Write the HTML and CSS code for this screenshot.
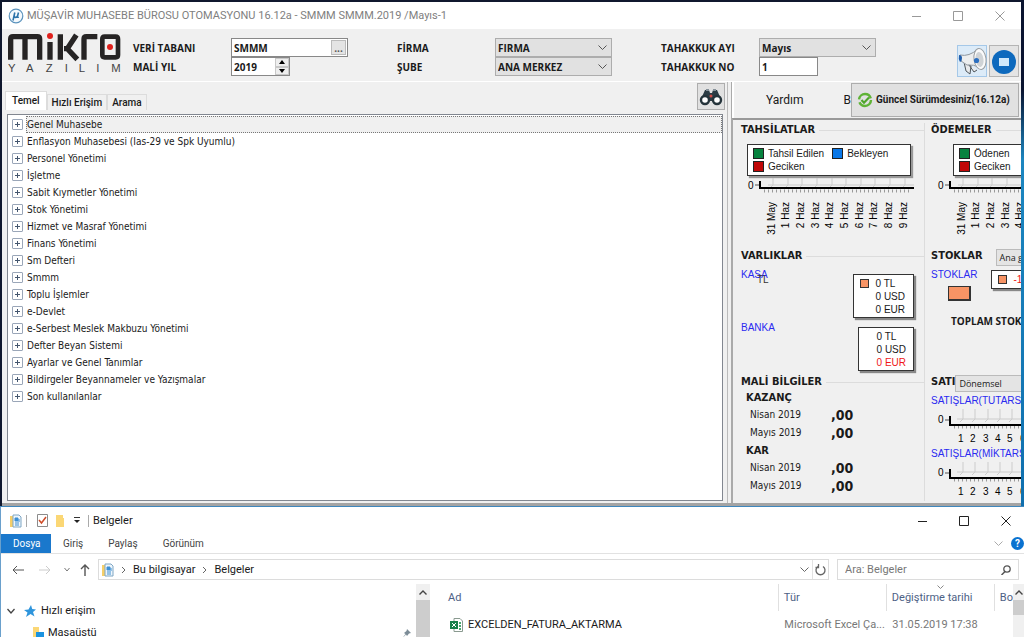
FILE: index.html
```html
<!DOCTYPE html>
<html lang="tr">
<head>
<meta charset="utf-8">
<title>Müşavir Muhasebe Bürosu Otomasyonu</title>
<link rel="stylesheet" href="styles.css">
</head>
<body>
<main class="app">
  <header class="titlebar">
    <svg class="app-icon" viewBox="0 0 16 16" width="16" height="16"><circle cx="8" cy="8" r="6.8" fill="#f4f9fd" stroke="#5b93bd" stroke-width="1.2"/><path d="M6.8 4.5 5 12.5M6.3 7.5c-.5 2.6 2.8 2.5 3.4 0l.8-3M9.7 7.5c-.4 1.5 0 2.2 1 1.5" fill="none" stroke="#2c73aa" stroke-width="1.6"/></svg>
    <h1 class="app-title">MÜŞAVİR MUHASEBE BÜROSU OTOMASYONU 16.12a - SMMM SMMM.2019 /Mayıs-1</h1>
    <div class="window-buttons faded">
      <button aria-label="Küçült"><svg width="10" height="10"><path d="M1 5.5h9" /></svg></button>
      <button aria-label="Büyüt"><svg width="10" height="10"><path d="M.5.5h9v9h-9z" /></svg></button>
      <button aria-label="Kapat"><svg width="10" height="10"><path d="m.5.5 9 9m0-9-9 9" /></svg></button>
    </div>
  </header>

  <section class="filters">
    <svg class="logo" viewBox="0 0 339 120" width="113" height="40" role="img" aria-label="mikro yazılım">
      <g fill="none" stroke="#262424" stroke-width="16">
        <path d="M8 80V18q0-7 7-7H88q7 0 7 7V80M51 11V80M126 27V80M157 4V80M168 47H178L205 6M176 45 208 79M228 80V18q0-7 7-7H268"/>
        <path stroke-width="14" d="M290 11H323q7 0 7 7V66q0 7-7 7H290q-7 0-7-7V18q0-7 7-7z"/>
      </g>
      <circle cx="126" cy="9" r="9" fill="#e0201c"/><circle cx="306" cy="42" r="9" fill="#e0201c"/>
      <text class="logo-sub" x="0 54 113 170 212 265 310" y="117">YAZILIM</text>
    </svg>
    <div class="field-group">
      <label for="db">VERİ TABANI</label>
      <div class="picker"><input id="db" value="SMMM"><button aria-label="Seç">...</button></div>
      <label for="year">MALİ YIL</label>
      <div class="spinner"><input id="year" value="2019"><span class="spin-buttons"><button aria-label="Artır"><svg width="6" height="4"><path d="M0 4 3 0l3 4z"/></svg></button><button aria-label="Azalt"><svg width="6" height="4"><path d="M0 0h6L3 4z"/></svg></button></span></div>
    </div>
    <div class="field-group">
      <label for="firm">FİRMA</label><select id="firm"><option>FIRMA</option></select>
      <label for="branch">ŞUBE</label><select id="branch"><option>ANA MERKEZ</option></select>
    </div>
    <div class="field-group">
      <label for="month">TAHAKKUK AYI</label><select id="month"><option>Mayıs</option></select>
      <label for="no">TAHAKKUK NO</label><input id="no" class="short" value="1">
    </div>
    <div class="header-tools">
      <button class="tool active" aria-label="Duyurular"><svg viewBox="0 0 30 32" width="30" height="32"><path d="m6 16 2 9 4 3 1-8zM11 19l5 7 3-2" fill="#e8eaec" stroke="#4e565c"/><path d="M2 9q9 2 18-6l3 19q-8-4-14-3l-6-4z" fill="#eceeef" stroke="#8f979e"/><ellipse cx="22" cy="13" rx="6" ry="10.500" transform="rotate(-8 22 13)" fill="#fafafa" stroke="#9a9fa3"/><ellipse cx="21.500" cy="13.500" rx="4" ry="7.500" transform="rotate(-8 21.500 13.500)" fill="#cfd3d6"/><circle cx="18.500" cy="14.500" r="2.600" fill="#2b6fc0"/><path d="M1 9q3 0 3 3t-2 4q-2-3-1-7z" fill="#1f5fae"/></svg></button>
      <button class="tool" aria-label="Durdur"><svg viewBox="0 0 28 30" width="28" height="30"><circle cx="14" cy="16" r="12" fill="#0d69bd"/><path d="M9 12h10v8H9z" fill="#cfe8fa"/></svg></button>
    </div>
  </section>

  <div class="workspace">
    <section class="browser">
      <div class="tab-row">
        <nav class="tabs"><button class="current">Temel</button><button>Hızlı Erişim</button><button>Arama</button></nav>
        <button class="find" aria-label="Bul"><svg viewBox="0 0 24 20" width="24" height="20"><path d="M2 12 6 3h4l1 3h2l1-3h4l4 9v2H2z" fill="#2c3c44"/><path d="M7 3h3M14 3h3" stroke="#87929a" stroke-width="2"/><circle cx="6" cy="13" r="4" fill="#fff" stroke="#25343b" stroke-width="2.400"/><circle cx="18" cy="13" r="4" fill="#fff" stroke="#25343b" stroke-width="2.400"/><circle cx="12" cy="9" r="1.500" fill="#cf4a45"/></svg></button>
      </div>
      <ul class="tree">
        <li><button class="selected">Genel Muhasebe</button></li>
        <li><button>Enflasyon Muhasebesi (Ias-29 ve Spk Uyumlu)</button></li>
        <li><button>Personel Yönetimi</button></li>
        <li><button>İşletme</button></li>
        <li><button>Sabit Kıymetler Yönetimi</button></li>
        <li><button>Stok Yönetimi</button></li>
        <li><button>Hizmet ve Masraf Yönetimi</button></li>
        <li><button>Finans Yönetimi</button></li>
        <li><button>Sm Defteri</button></li>
        <li><button>Smmm</button></li>
        <li><button>Toplu İşlemler</button></li>
        <li><button>e-Devlet</button></li>
        <li><button>e-Serbest Meslek Makbuzu Yönetimi</button></li>
        <li><button>Defter Beyan Sistemi</button></li>
        <li><button>Ayarlar ve Genel Tanımlar</button></li>
        <li><button>Bildirgeler Beyannameler ve Yazışmalar</button></li>
        <li><button>Son kullanılanlar</button></li>
      </ul>
    </section>

    <aside class="side">
      <div class="side-bar">
        <button class="plain">Yardım</button><button class="plain cut">B</button>
        <button class="version"><svg viewBox="0 0 16 16" width="16" height="16"><circle cx="8" cy="8" r="6" fill="none" stroke="#5fb336" stroke-width="2.400" stroke-dasharray="16 3"/><path d="m4.500 8 2.500 2.700 5-5.200" fill="none" stroke="#4ea52b" stroke-width="2.200"/></svg>Güncel Sürümdesiniz(16.12a)</button>
      </div>
      <div class="cards">
        <section class="card">
          <h2>TAHSİLATLAR</h2>
          <div class="legend"><span class="key green">Tahsil Edilen</span><span class="key blue">Bekleyen</span><span class="key red">Geciken</span></div>
          <svg class="chart days" width="172" height="60">
            <path class="grid" d="M24 7h146M29 0v7l-3 3M44 0v7l-3 3M58 0v7l-3 3M73 0v7l-3 3M88 0v7l-3 3M102 0v7l-3 3M117 0v7l-3 3M131 0v7l-3 3M146 0v7l-3 3M161 0v7l-3 3"/>
            <path class="ticks" d="M20 13h148"/><path class="axis" d="M16 3v7H170"/><path class="zero" d="M11 7h4"/>
            <text x="4" y="11">0</text>
            <g class="turned"><text x="-24" y="31">31 May</text><text x="-24" y="45">1 Haz</text><text x="-24" y="60">2 Haz</text><text x="-24" y="75">3 Haz</text><text x="-24" y="89">4 Haz</text><text x="-24" y="104">5 Haz</text><text x="-24" y="119">6 Haz</text><text x="-24" y="133">7 Haz</text><text x="-24" y="148">8 Haz</text><text x="-24" y="163">9 Haz</text></g>
          </svg>
        </section>
        <section class="card">
          <h2>ÖDEMELER</h2>
          <div class="legend indent"><span class="key green">Ödenen</span><span class="key red">Geciken</span></div>
          <svg class="chart days" width="172" height="60">
            <path class="grid" d="M24 7h146M29 0v7l-3 3M44 0v7l-3 3M58 0v7l-3 3M73 0v7l-3 3M88 0v7l-3 3"/>
            <path class="ticks" d="M20 13h148"/><path class="axis" d="M16 3v7H170"/><path class="zero" d="M11 7h4"/>
            <text x="4" y="11">0</text>
            <g class="turned"><text x="-24" y="31">31 May</text><text x="-24" y="45">1 Haz</text><text x="-24" y="60">2 Haz</text><text x="-24" y="75">3 Haz</text><text x="-24" y="89">4 Haz</text></g>
          </svg>
        </section>
        <section class="card">
          <h2>VARLIKLAR</h2>
          <div class="asset"><h3>KASA<span class="overlay">TL</span></h3><div class="amounts"><i class="swatch"></i><span>0 TL</span><span>0 USD</span><span>0 EUR</span></div></div>
          <div class="asset"><h3>BANKA</h3><div class="amounts"><span>0 TL</span><span>0 USD</span><span class="negative">0 EUR</span></div></div>
        </section>
        <section class="card">
          <div class="card-head"><h2>STOKLAR</h2><button class="small">Ana grup</button></div>
          <div class="stock"><div><h3>STOKLAR</h3><i class="block"></i></div><div class="amounts single"><i class="swatch"></i><span class="negative">-1</span></div></div>
          <p class="total">TOPLAM STOK</p>
        </section>
        <section class="card">
          <h2>MALİ BİLGİLER</h2>
          <div class="finance"><h4>KAZANÇ</h4>
            <dl><dt>Nisan 2019</dt><dd>,00</dd><dt>Mayıs 2019</dt><dd>,00</dd></dl>
            <h4>KAR</h4>
            <dl><dt>Nisan 2019</dt><dd>,00</dd><dt>Mayıs 2019</dt><dd>,00</dd></dl></div>
        </section>
        <section class="card">
          <div class="card-head"><h2>SATI</h2><button class="small period">Dönemsel</button></div>
          <h3>SATIŞLAR(TUTARSAL)</h3>
          <svg class="chart sales" width="120" height="38">
            <path class="grid" d="M23 10h97M29 0v10l-3 3M41 0v10l-3 3M54 0v10l-3 3M66 0v10l-3 3M78 0v10l-3 3"/><path class="ticks" d="M20 18h100"/><path class="axis" d="M16 7v9h104"/><path class="zero" d="M11 11h4"/>
            <text x="4" y="14">0</text><text x="24" y="33">1</text><text x="36" y="33">2</text><text x="49" y="33">3</text><text x="61" y="33">4</text><text x="73" y="33">5</text><text x="86" y="33">6</text>
          </svg>
          <h3>SATIŞLAR(MİKTARSAL)</h3>
          <svg class="chart sales" width="120" height="38">
            <path class="grid" d="M23 10h97M29 0v10l-3 3M41 0v10l-3 3M54 0v10l-3 3M66 0v10l-3 3M78 0v10l-3 3"/><path class="ticks" d="M20 18h100"/><path class="axis" d="M16 7v9h104"/><path class="zero" d="M11 11h4"/>
            <text x="4" y="14">0</text><text x="24" y="33">1</text><text x="36" y="33">2</text><text x="49" y="33">3</text><text x="61" y="33">4</text><text x="73" y="33">5</text><text x="86" y="33">6</text>
          </svg>
        </section>
      </div>
    </aside>
  </div>
</main>

<svg class="defs" width="0" height="0">
  <symbol id="docs" viewBox="0 0 13 14"><path d="M1 2h5v11H1z" fill="#f6cf69"/><path d="M4 1h6l2 2v10H4z" fill="#eef6fc" stroke="#7fa6c4"/><path d="M6 4h3v3H6zM6 9h4M6 11h4M10 5v3" fill="#3c8fd4" stroke="#3c8fd4"/></symbol>
</svg>

<section class="explorer">
  <header class="ex-title">
    <svg width="13" height="14"><use href="#docs"/></svg><i class="bar"></i>
    <svg class="check" width="11" height="13"><path d="M.5.5h10v12H.5z" fill="#fff" stroke="#8b8b8b"/><path d="m2 6 2.500 3L9 3" fill="none" stroke="#cf4b27" stroke-width="1.500"/></svg>
    <svg class="folder" width="8" height="12"><path d="M0 0h7v3h1v9H0z" fill="#fbd775"/></svg>
    <svg class="more" width="6" height="7"><path d="M0 .5h6" stroke="#333"/><path d="M0 3h6L3 6z" fill="#222"/></svg><i class="bar"></i>
    <h2>Belgeler</h2>
    <div class="window-buttons">
      <button aria-label="Küçült"><svg width="10" height="10"><path d="M1 5.500h9" /></svg></button>
      <button aria-label="Büyüt"><svg width="10" height="10"><path d="M.5.5h9v9h-9z" /></svg></button>
      <button aria-label="Kapat"><svg width="10" height="10"><path d="m.5.5 9 9m0-9-9 9" /></svg></button>
    </div>
  </header>
  <nav class="ribbon"><button class="file">Dosya</button><button>Giriş</button><button>Paylaş</button><button>Görünüm</button>
    <span class="ribbon-end"><svg width="9" height="6"><path d="m.5.500 4 4 4-4" fill="none" stroke="#aaa"/></svg><button class="help" aria-label="Yardım">?</button></span></nav>
  <div class="address-row">
    <div class="arrows">
      <svg width="12" height="10"><path d="M12 5H1m4-4L1 5l4 4" stroke="#555"/></svg>
      <svg width="12" height="10"><path d="M0 5h11M7 1l4 4-4 4" stroke="#ccc"/></svg>
      <svg width="6" height="5"><path d="m.5 1 2.500 3L5.500 1" stroke="#777"/></svg>
      <svg width="10" height="12"><path d="M5 12V1M1 5l4-4 4 4" stroke="#555" stroke-width="1.400"/></svg>
    </div>
    <div class="address"><svg width="13" height="14"><use href="#docs"/></svg>
      <svg class="sep" width="5" height="8"><path d="m1 1 3 3-3 3"/></svg><a href="#pc">Bu bilgisayar</a>
      <svg class="sep" width="5" height="8"><path d="m1 1 3 3-3 3"/></svg><a href="#docs">Belgeler</a>
      <svg class="sep drop" width="9" height="6"><path d="m.5.500 4 4 4-4"/></svg>
      <button class="refresh" aria-label="Yenile"><svg width="11" height="12"><path d="M3 2.500a4.500 4.500 0 1 0 5 0M3.500 0v3.500H.5" fill="none" stroke="#666" stroke-width="1.300"/></svg></button>
    </div>
    <div class="search"><input aria-label="Ara" placeholder="Ara: Belgeler"><svg width="10" height="10"><circle cx="6" cy="4" r="3.200" fill="none" stroke="#555" stroke-width="1.300"/><path d="M4 6.500.5 10" stroke="#555" stroke-width="1.500"/></svg></div>
  </div>
  <div class="ex-body">
    <nav class="places">
      <a href="#quick"><svg width="8" height="6"><path d="m.5 1 3.500 4 3.500-4" fill="none" stroke="#444" stroke-width="1.300"/></svg><svg width="12" height="12"><path d="M7 0l1.200 4L12 4.500 9 7l1.500 4.500L6.500 9 2 12l1.500-4.500L0 5l4.500-.5z" fill="#2f95dc"/></svg>Hızlı erişim</a>
      <a class="child" href="#desktop"><svg width="12" height="12"><path d="M1 0h6v12H1z" fill="#fbd775"/><path d="M4 5h8v6H4z" fill="#1a93e0"/></svg>Masaüstü<svg class="pin" width="9" height="9"><path d="m5 0 4 4-2 .5L5 7 4 5.500.5 9 3.500 5 2 4l2.500-2z" fill="#7c8c97"/></svg></a>
    </nav>
    <div class="scroll"><svg width="8" height="5"><path d="m.5 4.500L4 1l3.500 3.500"/></svg><i></i></div>
    <table class="files">
      <colgroup><col><col class="c-type"><col class="c-date"><col class="c-size"></colgroup>
      <thead><tr><th>Ad</th><th>Tür</th><th class="sorted">Değiştirme tarihi</th><th>Bo</th></tr></thead>
      <tbody><tr><td class="name"><svg width="13" height="14"><path d="M4 .5h6l2.500 2.500v10.500H4z" fill="#fff" stroke="#8a9a90"/><path d="M9 4h2v2H9zM9 7h2v2H9zM9 10h2v2H9z" fill="#4aa670"/><path d="M0 3h8v8H0z" fill="#17804a"/><path d="m2 5 4 4m0-4L2 9" stroke="#fff"/></svg>EXCELDEN_FATURA_AKTARMA</td><td>Microsoft Excel Ça...</td><td>31.05.2019 17:38</td><td></td></tr></tbody>
    </table>
    <div class="scroll narrow"><svg width="8" height="5"><path d="m.5 4.500L4 1l3.500 3.500"/></svg><i class="thumb"></i></div>
  </div>
</section>
</body>
</html>
```
FILE: styles.css
```css
* { box-sizing: border-box; }
body {
  margin: 0;
  height: 100vh;
  overflow: hidden;
  display: flex;
  flex-direction: column;
  font: 11px/16px "Open Sans", "Noto Sans", sans-serif;
  color: #1a1a1a;
  background: #fff;
}
h1, h2, h3, h4, p, dl, dd, ul { margin: 0; padding: 0; font-weight: 400; }
button, input, select { font: inherit; color: inherit; margin: 0; padding: 0; border: 0; background: none; border-radius: 0; }
svg { flex: none; display: block; }
a { color: inherit; text-decoration: none; }
.defs { position: absolute; }

.app {
  flex: none;
  padding: 2px 3px 0 2px;
  background: linear-gradient(#0a1430 0, #0a1430 90px, #1c86c0 160px, #0f6fae 100%) right / 3px 100% no-repeat, #10182e;
}
.titlebar { display: flex; align-items: center; height: 27px; padding-left: 6px; background: #fff; }
.app-title { margin-left: 3px; font: 11px/16px Roboto, "Open Sans", sans-serif; color: #808080; white-space: nowrap; }
.window-buttons { display: flex; margin-left: auto; }
.window-buttons button { display: grid; place-items: center; width: 42px; height: 24px; }
.window-buttons path { fill: none; stroke: #222; }
.window-buttons.faded path { stroke: #999; }

.filters { display: flex; align-items: flex-start; padding: 4px 2px 4px 6px; background: #f0f0f0; border-bottom: 1px solid #fff; }
.logo { margin-right: 12px; }
.logo-sub { font: 34px "Liberation Sans", Arial, sans-serif; fill: #444; }
.field-group { display: grid; grid-template-columns: 98px 117px; grid-auto-rows: 19px; align-items: center; margin: 5px 49px 0 0; font-weight: 700; font-size: 10px; }
.field-group:last-of-type { margin-right: 0; }
.field-group select { width: 100%; height: 19px; padding: 0 2px; border: 1px solid #adadad; background: #e1e1e1 url("data:image/svg+xml,%3Csvg xmlns='http://www.w3.org/2000/svg' width='9' height='6'%3E%3Cpath d='m.5.5 4 4 4-4' fill='none' stroke='%23555'/%3E%3C/svg%3E") right 4px center no-repeat; appearance: none; }
.field-group input { min-width: 0; flex: 1; padding: 0 2px; }
.picker, .spinner, .field-group .short { display: flex; height: 19px; border: 1px solid #888; background: #fff; }
.picker button { width: 15px; margin: 1px; border: 1px solid #bbb; background: #e4e4e4; line-height: 8px; color: #555; }
.spinner, .short { width: 59px; }
.spin-buttons { display: flex; flex-direction: column; width: 14px; }
.spin-buttons button { flex: 1; display: grid; place-items: center; border: 1px solid #c8c8c8; background: #eee; }
.header-tools { display: flex; gap: 2px; margin: 12px 0 0 auto; }
.tool { display: grid; place-items: center; width: 30px; height: 32px; border: 1px solid #b5b5b5; background: #e4e4e4; }
.active { border-color: #a5c8e8; background: #dcebf8; }

.workspace { display: flex; background: #f0f0f0; border-bottom: 3px solid #a4a4a4; }
.browser { flex: 1; min-width: 0; display: flex; flex-direction: column; padding: 1px 2px 2px 3px; border-right: 1px solid #bbb; }
.tab-row { display: flex; justify-content: space-between; align-items: flex-end; }
.tabs { display: flex; align-items: flex-end; font: 500 10px/14px Roboto, "Open Sans", sans-serif; }
.tabs button { height: 16px; padding: 0 4px; line-height: 14px; border: 1px solid #dcdcdc; border-bottom: 0; white-space: nowrap; }
.tabs .current { height: 19px; padding: 0 6px; background: #fff; }
.find { display: grid; place-items: center; width: 28px; height: 27px; border: 1px solid #adadad; background: #e1e1e1; }
.tree { flex: 1; list-style: none; margin: 4px 2px 0 2px; padding: 1px 0 0 4px; border: 1px solid #828790; background: #fff; }
.tree li { display: flex; align-items: center; height: 17px; }
.tree li::before { content: ""; flex: none; width: 9px; height: 9px; margin-right: 3px; border: 1px solid #9aa6b8; border-radius: 1px; background: linear-gradient(#44566e, #44566e) center / 5px 1px no-repeat, linear-gradient(#44566e, #44566e) center / 1px 5px no-repeat, #fff; }
.tree button { height: 17px; padding: 0 0 0 1px; text-align: left; font: 10px/15px "DejaVu Sans Condensed", "DejaVu Sans", sans-serif; white-space: nowrap; }
.tree .selected { flex: 1; border: 1px dotted #777; padding: 0; background: #f0f0f0; }

.side { flex: none; width: 290px; margin-left: 3px; overflow: hidden; border-left: 1px solid #aaa; background: #f0f0f0; }
.side-bar { display: flex; align-items: center; height: 36px; padding: 0 2px 0 32px; font: 12px/16px Roboto, "Open Sans", sans-serif; border-left: 2px solid #fff; }
.plain.cut { margin-left: auto; }
.version { display: flex; align-items: center; gap: 3px; height: 34px; width: 168px; padding: 0 5px; border: 1px solid #adadad; background: #e1e1e1; font: 700 10px/16px Roboto, "Open Sans", sans-serif; white-space: nowrap; }
.cards { display: grid; grid-template-columns: 190px 170px; padding: 3px 0 2px 2px; border-top: 2px solid #999; border-left: 1px solid #aaa; }
.card { min-height: 126px; padding-left: 6px; border-right: 1px solid #dcdcdc; overflow: hidden; }
.card h2 { display: flex; align-items: center; gap: 4px; font: 700 11px/14px "DejaVu Sans Condensed", "DejaVu Sans", sans-serif; }
.card > h2::after { content: ""; flex: 1; height: 1px; background: #dcdcdc; }
.card h3 { font: 10px/13px "Liberation Sans", Arial, sans-serif; color: #2a2af0; }
.legend { display: flex; flex-wrap: wrap; column-gap: 8px; width: 164px; height: 32px; margin: 7px 0 2px 6px; padding: 2px 5px; border: 1px solid #333; background: #fff; box-shadow: 2px 2px 1px #999; font: 10px/13px "Liberation Sans", Arial, sans-serif; }
.legend.indent { width: 120px; margin-left: 22px; flex-direction: column; }
.key { display: flex; align-items: center; gap: 4px; }
.key::before { content: ""; width: 9px; height: 9px; border: 1px solid #222; background: #07833f; }
.blue::before { background: #0a78e8; }
.red::before { background: #c00808; }
.chart { margin-left: 3px; font: 10px "Liberation Sans", Arial, sans-serif; }
.sales { margin-top: 2px; margin-bottom: 0; }
.turned { transform: rotate(-90deg); text-anchor: end; }
.grid { fill: none; stroke: #ccc; }
.axis { fill: none; stroke: #000; stroke-width: 2; }
.zero { stroke: #555; }
.ticks { stroke: #999; stroke-width: 3; stroke-dasharray: 1 3; }
.asset { display: flex; justify-content: space-between; align-items: flex-start; padding-right: 10px; margin-top: 5px; }
.asset + .asset { margin-top: 3px; }
.asset h3 { position: relative; }
.overlay { position: absolute; left: 16px; top: 5px; color: #333; }
.amounts { position: relative; display: flex; flex-direction: column; height: 44px; margin-top: 6px; padding: 2px 8px 0 22px; border: 1px solid #333; background: #fff; box-shadow: 2px 2px 1px #888; font: 10px/13px "Liberation Sans", Arial, sans-serif; }
.asset + .asset .amounts { padding: 2px 7px 0 18px; }
.swatch { position: absolute; left: 6px; top: 4px; width: 9px; height: 9px; border: 1px solid #333; background: #f79465; }
.negative { color: #f01818; }
.card-head { display: flex; align-items: flex-start; height: 19px; }
.small { height: 17px; width: 70px; margin-left: 13px; padding: 0 3px; border: 1px solid #bbb; background: #e4e4e4; font-size: 9px; line-height: 14px; text-align: left; }
.small.period { margin-left: 0; }
.stock { display: flex; align-items: flex-start; gap: 13px; }
.block { display: block; width: 23px; height: 15px; margin: 5px 0 0 17px; border: 1px solid #333; border-width: 1px 2px 2px 1px; background: #f79465; }
.amounts.single { height: 19px; margin-top: 2px; width: 60px; }
.total { margin: 12px 0 0 20px; font-size: 10px; font-weight: 700; }
.finance { padding-left: 5px; }
.finance h4 { font: 700 11px/17px "DejaVu Sans Condensed", "DejaVu Sans", sans-serif; }
.finance dl { display: grid; grid-template-columns: 81px 1fr; grid-auto-rows: 18px; padding-left: 4px; align-items: center; }
.finance dt { font: 10px/18px "DejaVu Sans Condensed", "DejaVu Sans", sans-serif; }
.finance dd { font: 700 14px/18px "DejaVu Sans Condensed", "DejaVu Sans", sans-serif; }

.explorer { flex: 1; min-height: 0; display: flex; flex-direction: column; border-top: 1px solid #3f87bd; border-left: 1px solid #6aa0cc; background: #fff; font-family: Roboto, "Open Sans", sans-serif; }
.ex-title { display: flex; align-items: center; height: 27px; padding-left: 8px; }
.ex-title .window-buttons { gap: 6px; }
.ex-title .window-buttons button { width: 36px; }
.bar { width: 1px; height: 12px; margin-left: 4px; background: #aaa; }
.check { margin-left: 10px; }
.folder { margin-left: 8px; }
.more { margin-left: 10px; }
.more + .bar { margin-left: 8px; }
.ex-title h2 { margin-left: 4px; font-size: 11px; }
.ribbon { display: flex; height: 20px; border-bottom: 1px solid #e2e2e2; font-size: 10px; color: #444; }
.ribbon > button { padding: 0 12px; margin-right: 1px; }
.ribbon .file { width: 50px; margin: 0; background: #1a78cc; color: #fff; }
.ribbon-end { display: flex; align-items: center; gap: 8px; margin-left: auto; }
.help { width: 13px; height: 13px; border-radius: 50%; background: #0a72d0; color: #fff; font-weight: 700; line-height: 13px; }
.address-row { display: flex; align-items: center; gap: 8px; padding: 5px 5px 4px 11px; }
.arrows { display: flex; align-items: center; gap: 15px; width: 78px; }
.arrows svg + svg + svg { margin-left: -2px; }
.arrows svg:last-child { margin-left: -5px; }
.arrows path, .sep path { fill: none; }
.sep path { stroke: #666; }
.address { flex: 1; display: flex; align-items: center; gap: 7px; height: 21px; padding-left: 2px; border: 1px solid #dcdcdc; }
.drop { margin-left: auto; }
.refresh { display: grid; place-items: center; height: 19px; padding: 0 2px; margin-left: -4px; border-left: 1px solid #e2e2e2; }
.search { display: flex; align-items: center; width: 182px; height: 21px; padding: 0 7px; border: 1px solid #dcdcdc; }
.search input { flex: 1; min-width: 0; }
.search input::placeholder { color: #777; opacity: 1; }
.ex-body { flex: 1; min-height: 0; display: flex; overflow: hidden; }
.places { width: 415px; padding: 16px 5px 0 6px; }
.places a { display: flex; align-items: center; gap: 9px; height: 22px; white-space: nowrap; }
.places a svg + svg { margin-right: -4px; }
.places .child { gap: 4px; padding-left: 25px; }
.places .child .pin { margin: 0 0 0 auto; }
.scroll { display: flex; flex-direction: column; align-items: center; width: 14px; padding-top: 6px; gap: 5px; background: #f0f0f0; }
.scroll path { fill: none; stroke: #444; stroke-width: 1.4; }
.scroll i { flex: 1; width: 100%; background: #cdcdcd; }
.scroll .thumb { flex: none; height: 15px; }
.scroll.narrow { width: 11px; }
.files { flex: 1; table-layout: fixed; border-collapse: collapse; align-self: flex-start; margin-left: 13px; }
.c-type, .c-date { width: 108px; }
.c-size { width: 14px; }
.files th, .files td { padding: 0 0 0 5px; text-align: left; font-weight: 400; white-space: nowrap; overflow: hidden; }
.files th { height: 27px; color: #4d6185; }
.files th + th { border-left: 1px solid #e0e0e0; }
.files th.sorted { background: url("data:image/svg+xml,%3Csvg xmlns='http://www.w3.org/2000/svg' width='7' height='5'%3E%3Cpath d='m.5.5 3 3 3-3' fill='none' stroke='%23888'/%3E%3C/svg%3E") center 1px no-repeat; }
.files td { height: 28px; padding-left: 6px; color: #777; }
.files td.name { display: flex; align-items: center; gap: 5px; padding-left: 7px; color: #1a1a1a; }
```
